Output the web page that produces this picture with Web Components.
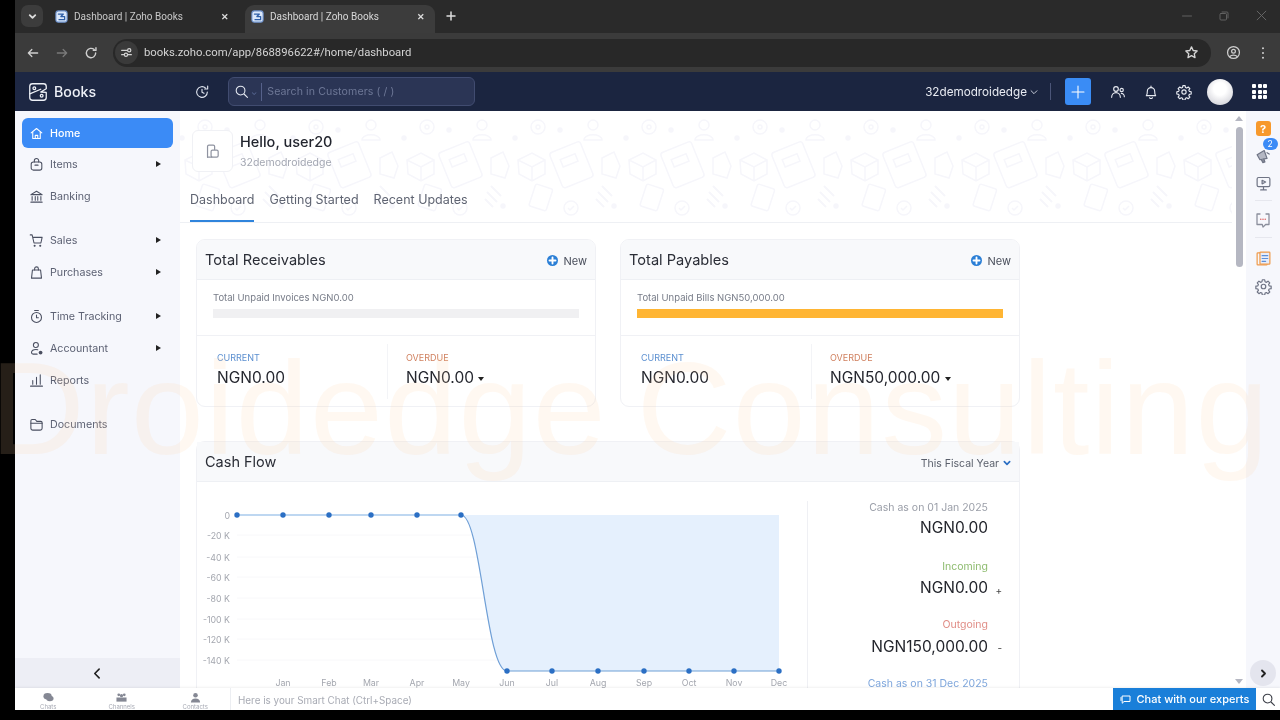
<!DOCTYPE html>
<html lang="en">
<head>
<meta charset="utf-8">
<title>Dashboard | Zoho Books</title>
<style>
  html, body { margin: 0; height: 720px; overflow: hidden; background: #000; }
  body { box-sizing: border-box; padding: 0 0 10px 15px; display: flex; flex-direction: column; font-family: Inter, "Liberation Sans", sans-serif; filter: blur(.3px); }
  .split { flex: 1; min-height: 0; display: flex; }
</style>
</head>
<body>
  <browser-tabs></browser-tabs>
  <browser-toolbar url="books.zoho.com/app/868896622#/home/dashboard"></browser-toolbar>
  <app-header org="32demodroidedge"></app-header>
  <div class="split">
    <side-nav></side-nav>
    <dash-main></dash-main>
    <page-scroll></page-scroll>
    <right-rail></right-rail>
  </div>
  <chat-bar></chat-bar>
  <water-mark>Droidedge Consulting</water-mark>

<script>
const svg = (w, h, body, extra = "") =>
  `<svg width="${w}" height="${h}" viewBox="0 0 24 24" fill="none" stroke="currentColor" stroke-width="1.7" stroke-linecap="round" stroke-linejoin="round" ${extra}>${body}</svg>`;

const booksGlyph = `<rect x="3" y="3" width="18" height="18" rx="4" fill="#dbe8fb" stroke="#6b8fc9"/><path d="M7 8h8l-4 4h6v5H8" stroke="#2f5fa8" stroke-width="2"/>`;

const icons = {
  home: `<path d="M3.5 11 12 4l8.5 7"/><path d="M6 9.5V20h12V9.5"/><path d="M10 20v-5h4v5"/>`,
  items: `<path d="M8.5 8V6a3.5 3.5 0 0 1 7 0v2"/><rect x="3.5" y="8" width="17" height="13" rx="3.5"/><path d="M9.5 13h5"/>`,
  bank: `<path d="M3 9 12 3.5 21 9z"/><path d="M5 12v6M10 12v6M14 12v6M19 12v6"/><path d="M3 21h18"/>`,
  cart: `<path d="M2 3h3l3 13h11l2-9H7"/><circle cx="9" cy="20.5" r=".8" fill="currentColor"/><circle cx="18" cy="20.5" r=".8" fill="currentColor"/>`,
  bag: `<path d="M5.5 8h13L20 21H4z"/><path d="M9 8V6a3 3 0 0 1 6 0v2"/>`,
  clock: `<circle cx="12" cy="13.5" r="8"/><path d="M12 9.5V14h3M9 2.5h6"/>`,
  person: `<circle cx="11" cy="6.5" r="4"/><path d="M14 14c-1-.3-2-.5-3-.5-4 0-7 2-7 5 0 1.5 1 2.5 2.5 2.5H13"/><circle cx="18.5" cy="18.5" r="3" fill="currentColor" stroke="none"/>`,
  bars: `<path d="M2.5 21h19M6 18v-6M12 18V7M18 18V3"/>`,
  folder: `<path d="M3 8V6a2 2 0 0 1 2-2h5l2.5 3H19a2 2 0 0 1 2 2v9a3 3 0 0 1-3 3H6a3 3 0 0 1-3-3z"/><path d="M3 10h18"/>`,
  search: `<circle cx="10.5" cy="10.5" r="7"/><path d="m16 16 5.5 5.5"/>`,
  history: `<path d="M20 12a8 8 0 1 1-2.5-5.8"/><path d="M20.5 3v4.5H16"/><path d="M12 8v4.5l3 1.5"/>`,
  team: `<circle cx="9" cy="7.5" r="3.5"/><path d="M2.5 20c0-4 3-7 6.5-7s6.5 3 6.5 7"/><circle cx="17.5" cy="9" r="2.5"/><path d="M17 14c2.5 0 4.5 2.5 4.5 5"/>`,
  bell: `<path d="M5 17.5c1.5-1.5 1.5-3 1.5-6.5a5.500 5.500 0 0 1 11 0c0 3.500 0 5 1.500 6.500z"/><path d="M10 20.500a2.200 2.200 0 0 0 4 0M12 3v2"/>`,
  gear: `<circle cx="12" cy="12" r="3.2"/><path d="M10.3 2.5h3.4l.5 2.8 1.900.8 2.300-1.600 2.400 2.400-1.600 2.300.8 1.900 2.800.5v3.400l-2.800.5-.8 1.900 1.600 2.300-2.400 2.400-2.300-1.600-1.900.8-.5 2.800h-3.400l-.5-2.800-1.900-.8-2.300 1.600-2.400-2.400 1.600-2.300-.8-1.900-2.800-.5v-3.400l2.800-.5.8-1.900-1.600-2.300 2.400-2.400 2.300 1.600 1.900-.8z"/>`,
  monitor: `<rect x="3" y="3.5" width="18" height="13" rx="2"/><path d="M12 16.5V21M8 21h8"/><path d="m10 7.5 5 2.5-5 2.5z"/>`,
  speech: `<path d="M8 4H4v14h7l1 3.5 3.5-3.5H20V4h-4" stroke="#8a8e9c"/><path d="M9 11h.01M12 11h.01M15 11h.01" stroke="#e06a6a" stroke-width="2.2"/>`,
  megaphone: `<path d="M3 11 13 5l4 11-10 2z" fill="#b4b7c3"/><path d="m9 18 2 4 3-1-1.5-4" fill="#8a8e9c"/><path d="M17 8l3 2"/>`
};

class BrowserTabs extends HTMLElement {
  constructor() {
    super();
    this.attachShadow({ mode: "open" });
  }
  connectedCallback() {
    const tab = (cls) => `<div class="tab ${cls}">
        <span class="fav">${svg(15, 15, booksGlyph)}</span>
        <span class="name">Dashboard | Zoho Books</span>
        <span class="x">✕</span>
      </div>`;
    this.shadowRoot.innerHTML = `
    <style>
      :host { display: flex; align-items: flex-end; height: 33px; background: #2a2a2a; color: #c8c8c8; font: 10px Roboto, sans-serif; box-sizing: border-box; padding-left: 6px; }
      .menu { width: 22px; height: 22px; margin: 0 8px 6px 0; border-radius: 7px; background: #3c3c3c; display: grid; place-items: center; color: #ddd; }
      .tab { width: 194px; height: 28px; box-sizing: border-box; display: flex; align-items: center; padding: 0 16px 5px 3px; border-radius: 9px 9px 0 0; }
      .tab.on { width: 190px; padding: 0 10px 5px 5px; background: #3c3c3c; color: #d8d8d8; }
      .fav { width: 15px; height: 15px; margin-right: 5px; }
      .name { flex: 1; white-space: nowrap; }
      .x { font-size: 9px; font-weight: 700; color: #ddd; }
      .plus { margin: 0 0 11px 10px; width: 12px; color: #ddd; display: grid; place-items: center; }
      .win { margin-left: auto; display: flex; align-items: center; padding: 0 12px 11px 0; color: #6a6a6a; }
      .win svg { display: block; margin-left: 25px; }
    </style>
    <div class="menu">${svg(11, 11, `<path d="m6 9 6 6 6-6"/>`, 'style="stroke-width:4"')}</div>
    ${tab("")}${tab("on")}
    <div class="plus">${svg(12, 12, `<path d="M12 4v16M4 12h16"/>`, 'style="stroke-width:3"')}</div>
    <div class="win">
      ${svg(12, 12, `<path d="M3 12h18"/>`)}
      ${svg(12, 12, `<rect x="4" y="7" width="13" height="13" rx="2"/><path d="M8 4h10a2 2 0 0 1 2 2v10"/>`)}
      ${svg(13, 13, `<path d="m4 4 16 16M20 4 4 20"/>`)}
    </div>`;
  }
}
customElements.define("browser-tabs", BrowserTabs);

class BrowserToolbar extends HTMLElement {
  constructor() {
    super();
    this.attachShadow({ mode: "open" });
  }
  connectedCallback() {
    this.shadowRoot.innerHTML = `
    <style>
      :host { display: flex; align-items: center; height: 39px; background: #3b3b3b; color: #cfcfcf; box-sizing: border-box; padding: 0 10px 0 11px; }
      .nav { width: 14px; height: 14px; display: grid; place-items: center; margin-right: 15px; }
      .nav.off { color: #7a7a7a; }
      .pill { flex: 1; height: 28px; margin: 0 15px 0 0; background: #282828; border-radius: 14px; display: flex; align-items: center; padding-right: 12px; font: 11.3px Roboto, sans-serif; color: #d4d4d4; }
      .site { width: 23px; height: 23px; border-radius: 50%; margin: 0 6px 0 2px; background: #3a3a3a; display: grid; place-items: center; }
      .url { flex: 1; }
      .prof { margin-right: 15px; }
      svg { display: block; }
    </style>
    <span class="nav">${svg(14, 14, `<path d="M20 12H4M10 6l-6 6 6 6"/>`, 'style="stroke-width:2.2"')}</span>
    <span class="nav off">${svg(14, 14, `<path d="M4 12h16M14 6l6 6-6 6"/>`, 'style="stroke-width:2.2"')}</span>
    <span class="nav">${svg(14, 14, `<path d="M20 12a8 8 0 1 1-2.5-5.8"/><path d="M20.5 3v4.5H16"/>`, 'style="stroke-width:2.4"')}</span>
    <div class="pill">
      <span class="site">${svg(13, 13, `<path d="M3 8h10M3 16h4"/><circle cx="17" cy="8" r="3"/><circle cx="11" cy="16" r="3"/><path d="M15 16h6"/>`, 'style="stroke-width:2.2"')}</span>
      <span class="url">${this.getAttribute("url")}</span>
      <span>${svg(15, 15, `<path d="m12 3 2.7 5.8 6.3.8-4.6 4.3 1.2 6.3L12 17.1 6.4 20.2l1.2-6.3L3 9.6l6.3-.8z"/>`, 'style="stroke-width:2.2"')}</span>
    </div>
    <span class="prof">${svg(15, 15, `<circle cx="12" cy="12" r="9.5"/><circle cx="12" cy="10" r="3"/><path d="M6 18.5c3-3 9-3 12 0"/>`, 'style="stroke-width:2"')}</span>
    <span>${svg(14, 14, `<path d="M12 4v.01M12 12v.01M12 20v.01"/>`, 'style="stroke-width:3.5"')}</span>`;
  }
}
customElements.define("browser-toolbar", BrowserToolbar);

class AppHeader extends HTMLElement {
  constructor() {
    super();
    this.attachShadow({ mode: "open" });
  }
  connectedCallback() {
    const grid = Array.from({ length: 9 }, () => "<i></i>").join("");
    this.shadowRoot.innerHTML = `
    <style>
      :host { display: flex; align-items: center; height: 39px; background: #1b2540; color: #eef1f7; font-family: Inter, sans-serif; }
      .brand { width: 165px; height: 100%; display: flex; align-items: center; box-sizing: border-box; padding-left: 12px; gap: 5px; font-size: 14.2px; font-weight: 500; background: #1d2743; }
      .hist { width: 44px; padding-right: 4px; display: grid; place-items: center; color: #dfe4ee; }
      .search { width: 247px; height: 29px; box-sizing: border-box; background: #2b3555; border: 1px solid #414c70; border-radius: 6px; display: flex; align-items: center; padding-left: 5px; color: #e6eaf2; font-size: 10.6px; }
      .search em { font-style: normal; color: #5a6a96; font-size: 8px; margin: 0 4px 0 2px; }
      .search b { width: 1px; height: 18px; background: #56618a; margin-right: 5px; }
      .search span { color: #6d7796; letter-spacing: .1px; }
      .right { margin-left: auto; display: flex; align-items: center; height: 100%; }
      .org { font-size: 11.7px; color: #e8ebf2; }
      .chev { margin: 1px 0 0 2px; color: #d4d9e5; }
      .sep { width: 1px; height: 17px; background: #4b5578; margin: 0 14px 0 11px; }
      .add { width: 26px; height: 27px; border-radius: 3px; background: #3a8cf5; color: #fff; display: grid; place-items: center; }
      .ico { width: 16px; display: grid; place-items: center; color: #e6e9f0; }
      .avatar { width: 26px; height: 26px; border-radius: 50%; margin: 0 19px 0 15px; background: radial-gradient(circle at 50% 38%, #fff 0 30%, #e6e6ea 60%, #c5c7cf 100%); }
      .grid { display: grid; grid-template-columns: repeat(3, 4px); gap: 1.5px; margin-right: 13px; }
      .grid i { width: 4px; height: 4px; background: #fff; border-radius: 1px; }
      svg { display: block; }
    </style>
    <div class="brand">
      ${svg(22, 22, `<path d="M6 3h12a3 3 0 0 1 3 3v2.5L15 12l6 .5V18a3 3 0 0 1-3 3H6a3 3 0 0 1-3-3V6a3 3 0 0 1 3-3z"/><path d="M3 14 15 9"/><circle cx="8" cy="8" r="1.5"/><circle cx="16" cy="16" r="1.5"/>`, 'style="stroke-width:1.4"')}
      <span>Books</span>
    </div>
    <div class="hist">${svg(16, 16, icons.history)}</div>
    <div class="search">
      ${svg(15, 15, icons.search)}<em>⌄</em><b></b><span>Search in Customers ( / )</span>
    </div>
    <div class="right">
      <span class="org">${this.getAttribute("org")}</span>
      <span class="chev">${svg(10, 10, `<path d="m5 9 7 7 7-7"/>`, 'style="stroke-width:2.2"')}</span>
      <span class="sep"></span>
      <span class="add">${svg(16, 16, `<path d="M12 3v18M3 12h18"/>`, 'style="stroke-width:1.6"')}</span>
      <span class="ico" style="margin-left:19px">${svg(16, 16, icons.team)}</span>
      <span class="ico" style="margin-left:17px">${svg(16, 16, icons.bell)}</span>
      <span class="ico" style="margin-left:17px">${svg(16, 16, icons.gear)}</span>
      <span class="avatar"></span>
      <span class="grid">${grid}</span>
    </div>`;
  }
}
customElements.define("app-header", AppHeader);

class NavItem extends HTMLElement {
  constructor() {
    super();
    this.attachShadow({ mode: "open" });
  }
  connectedCallback() {
    const more = this.hasAttribute("more") ? `<span class="more"></span>` : "";
    this.shadowRoot.innerHTML = `
    <style>
      :host { display: flex; align-items: center; height: 32px; margin: 0 7px; padding: 0 12px 0 7px; box-sizing: border-box; color: #5c6173; font-size: 10.7px; }
      :host([active]) { height: 30px; background: #3b8bf6; color: #fff; border-radius: 6px; font-weight: 500; }
      :host([gap]) { margin-top: 12px; }
      .i { width: 15px; height: 15px; margin-right: 6px; color: #4a4f60; }
      :host([active]) .i { color: #fff; }
      .t { flex: 1; }
      .more { width: 0; height: 0; border-left: 5px solid #222; border-top: 3.5px solid transparent; border-bottom: 3.5px solid transparent; }
      svg { display: block; }
    </style>
    <span class="i">${svg(15, 15, icons[this.getAttribute("icon")])}</span>
    <span class="t">${this.getAttribute("label")}</span>${more}`;
  }
}
customElements.define("nav-item", NavItem);

class SideNav extends HTMLElement {
  constructor() {
    super();
    this.attachShadow({ mode: "open" });
  }
  connectedCallback() {
    this.shadowRoot.innerHTML = `
    <style>
      :host { display: flex; flex-direction: column; width: 165px; flex: none; background: #f6f7fc; font-family: Inter, sans-serif; }
      .list { flex: 1; padding-top: 7px; }
      .collapse { height: 30px; background: #edeef5; display: grid; place-items: center; color: #222; }
      svg { display: block; }
    </style>
    <div class="list">
      <nav-item icon="home" label="Home" active></nav-item>
      <nav-item icon="items" label="Items" more></nav-item>
      <nav-item icon="bank" label="Banking"></nav-item>
      <nav-item icon="cart" label="Sales" more gap></nav-item>
      <nav-item icon="bag" label="Purchases" more></nav-item>
      <nav-item icon="clock" label="Time Tracking" more gap></nav-item>
      <nav-item icon="person" label="Accountant" more></nav-item>
      <nav-item icon="bars" label="Reports"></nav-item>
      <nav-item icon="folder" label="Documents" gap></nav-item>
    </div>
    <div class="collapse">${svg(13, 13, `<path d="m15 4-8 8 8 8"/>`, 'style="stroke-width:3"')}</div>`;
  }
}
customElements.define("side-nav", SideNav);

class HeroBand extends HTMLElement {
  constructor() {
    super();
    this.attachShadow({ mode: "open" });
  }
  connectedCallback() {
    this.shadowRoot.innerHTML = `
    <style>
      :host { display: block; position: relative; height: 112px; box-sizing: border-box; border-bottom: 1px solid #eef0f4; font-family: Inter, sans-serif; overflow: hidden; }
      .bg { position: absolute; inset: 0; }
      .who { position: relative; display: flex; height: 78px; padding: 19px 0 0 12px; box-sizing: border-box; }
      .tile { width: 39px; height: 40px; border: 1px solid #f0f1f5; border-radius: 6px; background: #fff; display: grid; place-items: center; color: #8f93a0; margin-right: 7px; }
      h1 { margin: 3px 0 5px; font-size: 14.5px; line-height: 18px; font-weight: 500; color: #22252e; }
      p { margin: 0; font-size: 10.5px; line-height: 14px; color: #a3a7b2; }
      nav { position: relative; display: flex; gap: 15px; padding-left: 10px; font-size: 12.5px; color: #5f6472; height: 33px; }
      nav a { height: 33px; line-height: 22px; box-sizing: border-box; white-space: nowrap; }
      nav a.on { border-bottom: 2px solid #2f84dc; }
      svg { display: block; }
    </style>
    <svg class="bg" width="100%" height="100%" fill="none" stroke="#f6f6fb" stroke-width="1.5">
      <defs>
        <pattern id="doodle" width="111" height="111" patternUnits="userSpaceOnUse" x="-3" y="5">
          <rect x="45" y="30" width="33" height="38" rx="3" transform="rotate(-22 61 49)"/>
          <rect x="53" y="40" width="16" height="8" transform="rotate(-22 61 49)"/>
          <path d="M8 44l14-7 13 7v14l-13 7-13-7zM8 44l14 7 13-7M22 51v14"/>
          <path d="M92 42l12-6 6 14-4 12-14-4z"/>
          <rect x="22" y="70" width="18" height="23" rx="2" transform="rotate(18 31 81)"/>
          <circle cx="28" cy="11" r="7"/><circle cx="28" cy="11" r="2"/>
          <circle cx="83" cy="9" r="5"/><path d="M74 24c0-7 18-7 18 0z"/>
          <circle cx="61" cy="92" r="7"/><path d="m58 92 2 2 4-4"/>
          <path d="M92 70l10 10M88 76l10 10M86 83l8 8" stroke-width="2"/>
          <circle cx="5" cy="22" r="2" fill="#f6f6fb"/><circle cx="104" cy="90" r="2" fill="#f6f6fb"/><circle cx="50" cy="14" r="2" fill="#f6f6fb"/>
        </pattern>
      </defs>
      <rect width="100%" height="100%" fill="url(#doodle)" stroke="none"/>
    </svg>
    <div class="who">
      <div class="tile">${svg(17, 17, `<path d="M5 20V5a2 2 0 0 1 2-2h6a2 2 0 0 1 2 2v4"/><rect x="10" y="10" width="10" height="10" rx="2"/><path d="M5 20h6"/>`)}</div>
      <div><h1>Hello, user20</h1><p>32demodroidedge</p></div>
    </div>
    <nav><a class="on">Dashboard</a><a>Getting Started</a><a>Recent Updates</a></nav>`;
  }
}
customElements.define("hero-band", HeroBand);

class SummaryCard extends HTMLElement {
  constructor() {
    super();
    this.attachShadow({ mode: "open" });
  }
  connectedCallback() {
    const a = (n) => this.getAttribute(n);
    this.shadowRoot.innerHTML = `
    <style>
      :host { display: block; width: 400px; height: 168px; box-sizing: border-box; border: 1px solid #f0f1f5; border-radius: 9px; overflow: hidden; background: #fff; font-family: Inter, sans-serif; }
      header { height: 40px; box-sizing: border-box; background: #f8f9fb; border-bottom: 1px solid #eef0f4; display: flex; align-items: center; justify-content: space-between; padding: 0 8px 0 8px; }
      h2 { margin: 0; font-size: 14.6px; font-weight: 400; color: #2a2d36; }
      .new { display: flex; align-items: center; gap: 5px; font-size: 11px; color: #4a4f5c; margin-top: 2px; }
      .dot { width: 11px; height: 11px; border-radius: 50%; background: #2b7fd6; color: #fff; display: grid; place-items: center; }
      .bar { height: 56px; box-sizing: border-box; padding: 12px 16px 0 16px; border-bottom: 1px solid #f0f1f5; font-size: 9.5px; color: #777c88; }
      .track { height: 9px; margin-top: 6px; background: ${a("fill") ? a("fill") : "#f0f0f2"}; }
      .cols { display: grid; grid-template-columns: 190px 1fr; padding-top: 8px; }
      .col { height: 47px; padding: 8px 0 0 20px; }
      .col + .col { border-left: 1px solid #f3f4f7; padding-left: 18px; }
      .lab { font-size: 9px; line-height: 12px; }
      .cur { color: #5b8fd0; } .over { color: #d0805f; }
      .val { font-size: 15.5px; line-height: 20px; margin-top: 4px; color: #25272f; white-space: nowrap; }
      .caret { display: inline-block; margin: 0 0 2px 0; border-top: 4px solid #222; border-left: 3px solid transparent; border-right: 3px solid transparent; }
      svg { display: block; }
    </style>
    <header>
      <h2>${a("title")}</h2>
      <span class="new"><span class="dot">${svg(9, 9, `<path d="M12 4v16M4 12h16"/>`, 'style="stroke-width:5"')}</span>New</span>
    </header>
    <div class="bar">${a("unpaid")}<div class="track"></div></div>
    <div class="cols">
      <div class="col"><div class="lab cur">CURRENT</div><div class="val">${a("current")}</div></div>
      <div class="col"><div class="lab over">OVERDUE</div><div class="val">${a("overdue")} <span class="caret"></span></div></div>
    </div>`;
  }
}
customElements.define("summary-card", SummaryCard);

class CashChart extends HTMLElement {
  constructor() {
    super();
    this.attachShadow({ mode: "open" });
  }
  connectedCallback() {
    // coordinates are taken from the card's top left corner
    const xs = [41, 87, 133, 175, 221, 265, 311, 356, 402, 448, 493, 538, 583];
    const top = 34, low = 190;
    const ys = [34, 54, 76, 96, 117, 138, 158, 179];
    const yl = ["0", "-20 K", "-40 K", "-60 K", "-80 K", "-100 K", "-120 K", "-140 K"];
    const months = ["Jan", "Feb", "Mar", "Apr", "May", "Jun", "Jul", "Aug", "Sep", "Oct", "Nov", "Dec"];
    const curve = `M265 ${top}C285 ${top} 290 ${low} 311 ${low}`;
    const dots = xs.map((x, i) => `<circle cx="${x}" cy="${i < 6 ? top : low}" r="2.7" fill="#2b6fc4"/>`).join("");
    const grid = ys.slice(1).map((y) => `<path d="M41 ${y}H583" stroke="#f8f8fa"/>`).join("");
    const yt = yl.map((t, i) => `<text x="34" y="${ys[i] + 3.5}" text-anchor="end">${t}</text>`).join("");
    const mt = months.map((m, i) => `<text x="${xs[i + 1]}" y="205" text-anchor="middle">${m}</text>`).join("");
    this.shadowRoot.innerHTML = `
    <style>
      :host { display: block; width: 611px; height: 215px; flex: none; margin: -1px 0 0 -1px; }
      text { font: 8.8px Inter, sans-serif; fill: #a4a7af; }
    </style>
    <svg width="611" height="215" fill="none">
      ${grid}
      <path d="${curve}H583V${top}Z" fill="#e5f0fd"/>
      <path d="M41 ${top}H265" stroke="#7fb0e4" stroke-width="1.2"/>
      <path d="${curve}H583" stroke="#6f9fd6" stroke-width="1.2"/>
      ${dots}${yt}${mt}
    </svg>`;
  }
}
customElements.define("cash-chart", CashChart);

class CashRow extends HTMLElement {
  constructor() {
    super();
    this.attachShadow({ mode: "open" });
  }
  connectedCallback() {
    const sign = this.getAttribute("sign") || "";
    this.shadowRoot.innerHTML = `
    <style>
      :host { display: block; height: 58.7px; text-align: right; font-family: Inter, sans-serif; color: var(--tone, #9a9ea8); }
      .l { font-size: 10.5px; line-height: 14px; padding-right: 14px; }
      .v { display: flex; justify-content: flex-end; align-items: center; margin-top: 2px; font-size: 15.5px; line-height: 22px; color: #23252c; }
      .s { width: 14px; font-size: 10px; text-align: right; color: #444; padding-top: 3px; }
    </style>
    <div class="l"><slot></slot></div>
    <div class="v"><span>${this.getAttribute("value") || ""}</span><span class="s">${sign}</span></div>`;
  }
}
customElements.define("cash-row", CashRow);

class CashFlow extends HTMLElement {
  constructor() {
    super();
    this.attachShadow({ mode: "open" });
  }
  connectedCallback() {
    this.shadowRoot.innerHTML = `
    <style>
      :host { display: block; width: 824px; box-sizing: border-box; border: 1px solid #f0f1f5; border-radius: 9px 9px 0 0; background: #fff; font-family: Inter, sans-serif; margin-top: 34px; }
      header { height: 40px; box-sizing: border-box; background: #f8f9fb; border-bottom: 1px solid #eef0f4; display: flex; align-items: center; justify-content: space-between; padding: 0 8px 0 8px; }
      h2 { margin: 0; font-size: 14.5px; font-weight: 400; color: #2a2d36; }
      .fy { display: flex; align-items: center; gap: 4px; font-size: 10.5px; color: #5a5f6b; margin-top: 3px; }
      .body { display: flex; height: 230px; }
      .side { flex: 1; height: 100%; margin-top: 19px; border-left: 1px solid #eff0f4; box-sizing: border-box; padding-right: 17px; }
      svg { display: block; color: #2b6fc4; }
    </style>
    <header>
      <h2>Cash Flow</h2>
      <span class="fy">This Fiscal Year ${svg(8, 8, `<path d="m4 8 8 8 8-8"/>`, 'style="stroke-width:5"')}</span>
    </header>
    <div class="body">
      <cash-chart></cash-chart>
      <div class="side">
        <cash-row value="NGN0.00">Cash as on 01 Jan 2025</cash-row>
        <cash-row value="NGN0.00" sign="+" style="--tone:#8dbb6e">Incoming</cash-row>
        <cash-row value="NGN150,000.00" sign="-" style="--tone:#e08d86">Outgoing</cash-row>
        <cash-row style="--tone:#7ea6dc">Cash as on 31 Dec 2025</cash-row>
      </div>
    </div>`;
  }
}
customElements.define("cash-flow", CashFlow);

class DashMain extends HTMLElement {
  constructor() {
    super();
    this.attachShadow({ mode: "open" });
  }
  connectedCallback() {
    this.shadowRoot.innerHTML = `
    <style>
      :host { display: block; flex: 1; min-width: 0; background: #fff; overflow: hidden; }
      .pad { padding: 16px 0 0 16px; }
      .cards { display: flex; gap: 24px; }
    </style>
    <hero-band></hero-band>
    <div class="pad">
      <div class="cards">
        <summary-card title="Total Receivables" unpaid="Total Unpaid Invoices NGN0.00" current="NGN0.00" overdue="NGN0.00"></summary-card>
        <summary-card title="Total Payables" unpaid="Total Unpaid Bills NGN50,000.00" current="NGN0.00" overdue="NGN50,000.00" fill="#ffb533"></summary-card>
      </div>
      <cash-flow></cash-flow>
    </div>`;
  }
}
customElements.define("dash-main", DashMain);

class PageScroll extends HTMLElement {
  constructor() {
    super();
    this.attachShadow({ mode: "open" });
  }
  connectedCallback() {
    this.shadowRoot.innerHTML = `
    <style>
      :host { display: flex; flex-direction: column; align-items: center; width: 14px; flex: none; background: #fff; box-sizing: border-box; padding: 5px 0 4px; }
      .up, .down { width: 0; height: 0; border-left: 4px solid transparent; border-right: 4px solid transparent; }
      .up { border-bottom: 5px solid #b5b7c2; }
      .down { margin-top: auto; border-top: 5px solid #b5b7c2; }
      .thumb { width: 7px; height: 140px; margin-top: 6px; background: #b5b7c2; border-radius: 4px; }
    </style>
    <span class="up"></span><span class="thumb"></span><span class="down"></span>`;
  }
}
customElements.define("page-scroll", PageScroll);

class RightRail extends HTMLElement {
  constructor() {
    super();
    this.attachShadow({ mode: "open" });
  }
  connectedCallback() {
    this.shadowRoot.innerHTML = `
    <style>
      :host { position: relative; display: flex; flex-direction: column; align-items: center; width: 34px; flex: none; background: #f6f7fc; box-sizing: border-box; padding-top: 10px; color: #6f7485; font-family: Inter, sans-serif; }
      .help { width: 15px; height: 15px; border-radius: 3px; background: #f7992c; color: #fff; display: grid; place-items: center; font-size: 11px; font-weight: 700; }
      .slot { position: relative; height: 28px; display: grid; place-items: center; }
      .badge { position: absolute; top: -3px; left: 8px; width: 15px; height: 12px; border-radius: 6px; background: #3b8bf6; color: #fff; font-size: 8.5px; line-height: 12px; text-align: center; }
      hr { width: 17px; height: 1px; border: 0; background: #e6e7ee; margin: 3px 0; }
      .open { position: absolute; left: 4px; bottom: 2px; width: 26px; height: 26px; border-radius: 50%; background: #e4e5ee; display: grid; place-items: center; color: #222; }
      svg { display: block; }
    </style>
    <div class="help">?</div>
    <div class="slot" style="margin-top:5px">${svg(17, 17, icons.megaphone)}<span class="badge">2</span></div>
    <div class="slot">${svg(17, 17, icons.monitor)}</div>
    <hr style="margin-bottom:5px">
    <div class="slot">${svg(18, 18, icons.speech)}</div>
    <hr>
    <div class="slot" style="margin-top:3px">${svg(17, 17, `<rect x="3" y="4" width="14" height="17" rx="1" stroke="#ef9a4a"/><rect x="7" y="3" width="14" height="17" rx="1" fill="#e8ecf8" stroke="#ef9a4a"/><path d="M10 8h8M10 12h8M10 16h5" stroke="#5d8fd8"/>`)}</div>
    <div class="slot">${svg(17, 17, icons.gear)}</div>
    <div class="open">${svg(9, 9, `<path d="m8 4 8 8-8 8"/>`, 'style="stroke-width:5"')}</div>`;
  }
}
customElements.define("right-rail", RightRail);

class ChatBar extends HTMLElement {
  constructor() {
    super();
    this.attachShadow({ mode: "open" });
  }
  connectedCallback() {
    const tab = (label, ico) => `<div class="tab">${svg(15, 13, ico, 'style="stroke:none;fill:#858894"')}<span>${label}</span></div>`;
    this.shadowRoot.innerHTML = `
    <style>
      :host { display: flex; align-items: stretch; height: 22px; flex: none; background: #fff; font-family: Inter, sans-serif; box-shadow: 0 -1px 2px #0000000f; position: relative; }
      .tab { width: 73.5px; display: flex; flex-direction: column; align-items: center; color: #a8abb5; font-size: 6px; line-height: 7px; padding-top: 4px; box-sizing: border-box; }
      style + .tab { margin-left: -3.5px; }
      .input { flex: 1; margin-left: -2px; border-left: 1px solid #eceef2; display: flex; align-items: center; padding: 1px 0 0 7px; font-size: 9.9px; color: #a8abb4; }
      .exp { width: 143px; background: #1a7fd9; color: #fff; display: flex; align-items: center; justify-content: center; gap: 5px; font-size: 11px; font-weight: 500; }
      .find { width: 24px; display: grid; place-items: center; color: #3c3f48; }
      svg { display: block; }
    </style>
    ${tab("Chats", `<ellipse cx="10" cy="9" rx="9" ry="7"/><ellipse cx="15" cy="14" rx="8" ry="6"/>`)}
    ${tab("Channels", `<circle cx="6" cy="6" r="3"/><circle cx="18" cy="6" r="3"/><circle cx="12" cy="8" r="3.5"/><path d="M1 12h22v9H1z"/>`)}
    ${tab("Contacts", `<circle cx="12" cy="7" r="5"/><path d="M2 23c0-6 4-9 10-9s10 3 10 9z"/>`)}
    <div class="input">Here is your Smart Chat (Ctrl+Space)</div>
    <div class="exp">${svg(12, 12, `<path d="M5 6h15v11H8l-3 3zM2 9v6"/>`, 'style="stroke-width:2"')}Chat with our experts</div>
    <div class="find">${svg(15, 15, icons.search)}</div>`;
  }
}
customElements.define("chat-bar", ChatBar);

class WaterMark extends HTMLElement {
  constructor() {
    super();
    this.attachShadow({ mode: "open" });
  }
  connectedCallback() {
    this.shadowRoot.innerHTML = `
    <style>
      :host { position: absolute; left: -10px; top: 334px; pointer-events: none; font: 400 131px/150px "Liberation Sans", sans-serif; color: rgba(255, 210, 160, .15); white-space: nowrap; letter-spacing: 1.4px; word-spacing: -8px; }
    </style>
    <slot></slot>`;
  }
}
customElements.define("water-mark", WaterMark);
</script>
</body>
</html>
